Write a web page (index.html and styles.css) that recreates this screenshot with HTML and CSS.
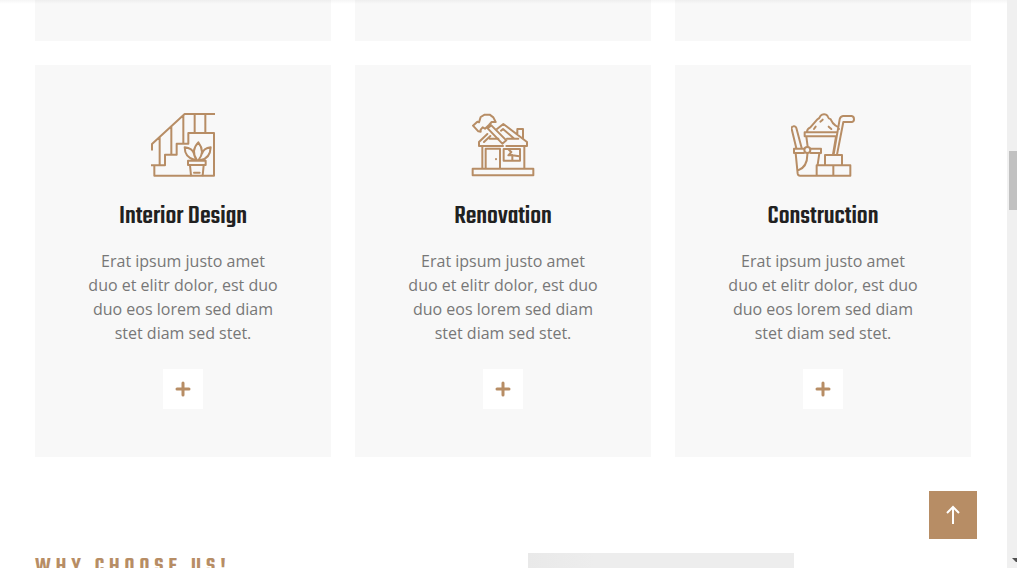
FILE: index.html
```html
<!DOCTYPE html>
<html lang="en">
<head>
<meta charset="utf-8">
<meta name="viewport" content="width=device-width, initial-scale=1">
<title>Services</title>
<link rel="stylesheet" href="styles.css">
</head>
<body>
<div class="window">
  <main class="page">
    <section class="container services">
      <div class="card-end"></div>
      <div class="card-end"></div>
      <div class="card-end"></div>
      <article class="card">
        <svg class="icon" viewBox="24 24 192 192" aria-hidden="true">
          <path d="M27 134V117L125 27H215M50 96V180M85 65V149M121 32V116M155 29V83M187 29V83M25 181H66V149H101V116H136V84H213V212H34V182"/>
          <path d="M135 167H188V180H135ZM141 181L144 211M182 181L179 211M153 203H170M162 166C148 147 151 128 166 112C180 130 180 149 166 166M156 165C137 161 125 149 125 127C141 129 150 136 153 146M173 165C191 162 202 149 203 127C188 129 180 136 177 146"/>
        </svg>
        <h2 class="card-title">Interior Design</h2>
        <p class="card-text">Erat ipsum justo amet duo et elitr dolor, est duo duo eos lorem sed diam stet diam sed stet.</p>
        <button class="more" type="button" aria-label="More about Interior Design"><svg class="plus" viewBox="0 0 16 16"><path d="M8 2V14M2 8H14"/></svg></button>
      </article>
      <article class="card">
        <svg class="icon" viewBox="24 24 192 192" aria-hidden="true">
          <path d="M29 191H211V211H29ZM58 190V124M184 124V190M68 190V131H111V190M122 132H171V167H122ZM99 162V163M73 87L48 111V123H120M130 123H192V111L121 57L102 72M63 111L82 93M80 101H106M114 77L120 72L154 101H132M132 101H166M163 86V72H180V100"/>
          <path d="M74 70L85 61L130 106L118 116ZM30 62L43 50L48 52L53 36L65 29H80L91 37L98 51H86L78 60L66 71L59 67L53 74V80L46 79ZM136 133L145 141L136 151L148 150V165M148 151L169 154"/>
        </svg>
        <h2 class="card-title">Renovation</h2>
        <p class="card-text">Erat ipsum justo amet duo et elitr dolor, est duo duo eos lorem sed diam stet diam sed stet.</p>
        <button class="more" type="button" aria-label="More about Renovation"><svg class="plus" viewBox="0 0 16 16"><path d="M8 2V14M2 8H14"/></svg></button>
      </article>
      <article class="card">
        <svg class="icon" viewBox="24 24 192 192" aria-hidden="true">
          <path d="M72 80C72 73 76 70 82 67L103 43C108 41 111 37 113 32C118 27 128 26 133 32C135 37 136 42 143 43C147 52 151 57 157 61C164 64 167 67 168 72M65 82H163M65 82V94H159M70 95L74 125M159 95L150 148M112 50L119 44M93 72L98 65M137 65L145 72M162 149L181 51H207Q213 50 213 43Q213 34 206 33H180Q172 34 170 43L152 148"/>
          <path d="M40 130L26 72Q25 65 31 64Q38 62 40 69L56 129M64 131H33V144H63M81 131H114V144H83M38 145L44 206Q45 212 51 212H101M109 145L104 179M73 145C74 172 64 190 44 197M126 180V150H177V180M101 181H202V212H101ZM151 181V212"/><circle cx="73" cy="135" r="9"/>
        </svg>
        <h2 class="card-title">Construction</h2>
        <p class="card-text">Erat ipsum justo amet duo et elitr dolor, est duo duo eos lorem sed diam stet diam sed stet.</p>
        <button class="more" type="button" aria-label="More about Construction"><svg class="plus" viewBox="0 0 16 16"><path d="M8 2V14M2 8H14"/></svg></button>
      </article>
    </section>
    <section class="container about">
      <h3 class="eyebrow">WHY CHOOSE US!</h3>
      <div class="photo"></div>
    </section>
  </main>
  <div class="scrollbar"><div class="thumb"></div><svg class="down" viewBox="0 0 5 4"><path d="M0 0H5V4H4Z"/></svg></div>
  <div class="top-shadow"></div>
  <a class="to-top" href="#" aria-label="Back to top"><svg class="arrow" viewBox="0 0 24 24"><path d="M12 21V4M6 10L12 4L18 10"/></svg></a>
</div>
</body>
</html>
```
FILE: styles.css
```css
* { box-sizing: border-box; }
body {
  margin: 0;
  background: #fff;
  color: #777;
  font: 16px/24px "Open Sans", sans-serif;
}
.window {
  position: relative;
  display: flex;
  height: 100vh;
  overflow: hidden;
}
.page { flex: 1; min-width: 0; padding-right: 1px; }
.container {
  width: 100%;
  max-width: 960px;
  margin: 0 auto;
  padding: 0 12px;
}
.services {
  display: grid;
  grid-template-columns: repeat(3, 1fr);
  gap: 24px;
}
.card-end { height: 41px; background: #f8f8f8; }
.card {
  display: flex;
  flex-direction: column;
  align-items: center;
  padding: 48px 50px;
  background: #f8f8f8;
  text-align: center;
}
.icon {
  width: 64px;
  height: 64px;
  margin-bottom: 24px;
  fill: none;
  stroke: #b78d65;
  stroke-width: 6;
  stroke-linejoin: round;
  stroke-linecap: round;
}
.card-title {
  margin: 0 0 16px;
  color: #212121;
  font: 500 27px/32px Teko, "Roboto Condensed", sans-serif;
  white-space: nowrap;
}
.card-text { margin: 0 0 24px; }
.more {
  display: grid;
  place-items: center;
  width: 40px;
  height: 40px;
  padding: 0;
  border: 0;
  background: #fff;
}
.plus {
  width: 16px;
  height: 16px;
  stroke: #b78d65;
  stroke-width: 3;
  stroke-linecap: round;
}
.about {
  display: grid;
  grid-template-columns: 1fr 266px;
  padding-top: 96px;
  padding-right: 189px;
}
.eyebrow {
  margin: 0;
  color: #b78d65;
  font: 600 21px/28px Teko, "Roboto Condensed", sans-serif;
  letter-spacing: 5px;
}
.photo { height: 240px; background: linear-gradient(90deg, #e9e9e9, #ededed 25%); }
.scrollbar {
  position: relative;
  flex: 0 0 10px;
  padding: 151px 0 0 2px;
  background: #f0f0f0;
}
.thumb { height: 59px; background: #c1c1c1; }
.down {
  position: absolute;
  right: 0;
  bottom: 6px;
  width: 5px;
  height: 4px;
  fill: #505050;
}
.top-shadow {
  position: absolute;
  top: 0;
  left: 0;
  right: 10px;
  height: 4px;
  background: linear-gradient(rgba(0, 0, 0, .04), transparent);
}
.to-top {
  position: absolute;
  right: 40px;
  bottom: 29px;
  display: grid;
  place-items: center;
  width: 48px;
  height: 48px;
  background: #b78d65;
}
.arrow {
  width: 24px;
  height: 24px;
  fill: none;
  stroke: #fff;
  stroke-width: 2;
}
```
